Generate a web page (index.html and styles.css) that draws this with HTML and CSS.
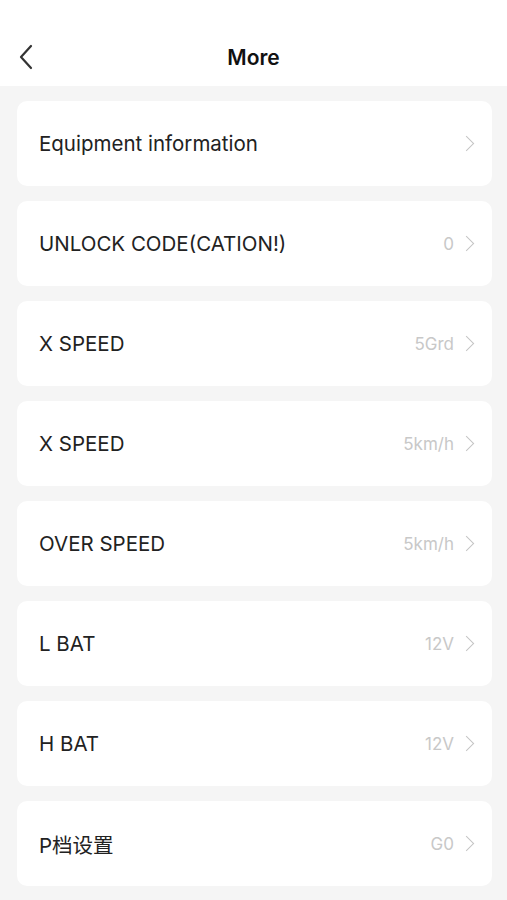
FILE: index.html
```html
<!DOCTYPE html>
<html lang="en">
<head>
  <meta charset="UTF-8" />
  <meta name="viewport" content="width=device-width, initial-scale=1" />
  <title>More</title>
  <link rel="stylesheet" href="styles.css">
</head>
<body>
  <header class="topbar">
    <button class="back" aria-label="Back">
      <svg width="16" height="26" viewBox="0 0 16 26"><path d="M13 2 L3 13 L13 24" fill="none" stroke="#333" stroke-width="2.2" stroke-linecap="round" stroke-linejoin="round"/></svg>
    </button>
    <h1>More</h1>
  </header>

  <main class="list">
    <div class="row"><span class="label">Equipment information</span><span class="value"></span><i class="arrow"></i></div>
    <div class="row"><span class="label">UNLOCK CODE(CATION!)</span><span class="value">0</span><i class="arrow"></i></div>
    <div class="row"><span class="label">X SPEED</span><span class="value">5Grd</span><i class="arrow"></i></div>
    <div class="row"><span class="label">X SPEED</span><span class="value">5km/h</span><i class="arrow"></i></div>
    <div class="row"><span class="label">OVER SPEED</span><span class="value">5km/h</span><i class="arrow"></i></div>
    <div class="row"><span class="label">L BAT</span><span class="value">12V</span><i class="arrow"></i></div>
    <div class="row"><span class="label">H BAT</span><span class="value">12V</span><i class="arrow"></i></div>
    <div class="row"><span class="label">P档设置</span><span class="value">G0</span><i class="arrow"></i></div>
  </main>
</body>
</html>
```

FILE: styles.css
```css
body {
  margin: 0;
  background: #f5f5f5;
  font-family: Inter, "Noto Sans CJK SC", sans-serif;
  color: #222;
}

.topbar {
  position: relative;
  height: 86px;
  background: #fff;
  display: flex;
  align-items: center;
  justify-content: center;
  padding-top: 28px;
  box-sizing: border-box;
}

.topbar h1 {
  margin: 0;
  font-size: 21px;
  font-weight: 600;
  color: #111;
}

.back {
  position: absolute;
  left: 18px;
  top: 44px;
  background: none;
  border: 0;
  padding: 0;
  display: flex;
}

.list {
  padding: 15px 15px 0 17px;
  display: flex;
  flex-direction: column;
  gap: 15px;
}

.row {
  height: 85px;
  background: #fff;
  border-radius: 10px;
  display: flex;
  align-items: center;
  padding: 0 17px 0 22px;
}

.label {
  flex: 1;
  font-size: 20.5px;
  color: #222;
}

.value {
  font-size: 17px;
  color: #c8c8c8;
  margin-right: 7px;
}

.arrow {
  width: 10px;
  height: 10px;
  border-top: 1.6px solid #c4c4c4;
  border-right: 1.6px solid #c4c4c4;
  transform: rotate(45deg);
  margin-right: 3px;
}
```
